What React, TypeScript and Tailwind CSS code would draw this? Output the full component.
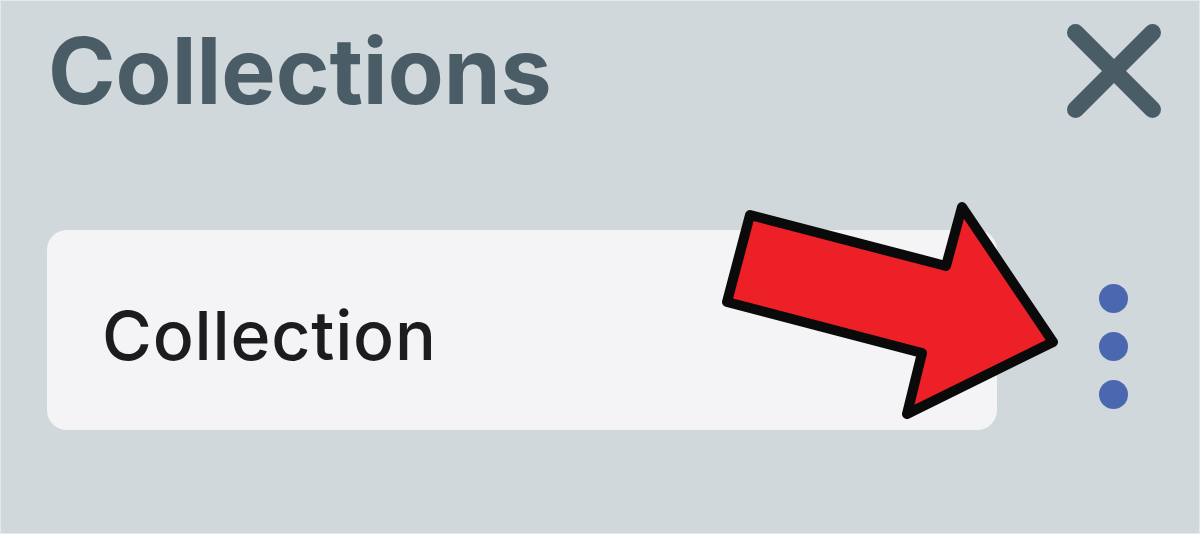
export default function App() {
  return (
    <div className="relative flex h-[534px] w-[1200px] flex-col overflow-hidden border border-[#e4e9eb] bg-[#d0d8dc] font-['Inter',sans-serif]">
      {/* Header */}
      <div className="flex h-[229px] items-start justify-between pl-[47px] pr-[31px] pt-[10px]">
        <h1 className="text-[91.4px] leading-[120px] font-bold text-[#4a5c66]">Collections</h1>
        <svg className="mt-[6px] h-[108px] w-[108px]" viewBox="0 0 108 108" fill="none" aria-label="Close">
          <path d="M15.5 15.5L92.5 92.5M92.5 15.5L15.5 92.5" stroke="#4a5c66" strokeWidth={17} strokeLinecap="round" />
        </svg>
      </div>

      {/* Collection row */}
      <div className="flex items-start pl-[46px] pr-[71px]">
        <div className="flex h-[200px] w-[950px] items-center rounded-[20px] bg-[#f4f4f6] pl-[55px] pt-[10px]">
          <span className="text-[68px] leading-none font-medium tracking-[0.8px] text-[#1c1c1e]">Collection</span>
        </div>
        <div className="ml-auto mt-[54px] flex flex-col gap-[19px]">
          <span className="h-[29px] w-[29px] rounded-full bg-[#4b67b0]" />
          <span className="h-[29px] w-[29px] rounded-full bg-[#4b67b0]" />
          <span className="h-[29px] w-[29px] rounded-full bg-[#4b67b0]" />
        </div>
      </div>

      {/* Callout arrow */}
      <svg className="absolute left-[-1px] top-[-1px] h-[534px] w-[1200px]" viewBox="0 0 1200 534" fill="none">
        <path
          d="M750 215L946 266L962 207L1053 342L907 414L922 353L727 302Z"
          fill="#ee2027"
          stroke="#0a0a0a"
          strokeWidth={10}
          strokeLinejoin="round"
        />
      </svg>
    </div>
  );
}
